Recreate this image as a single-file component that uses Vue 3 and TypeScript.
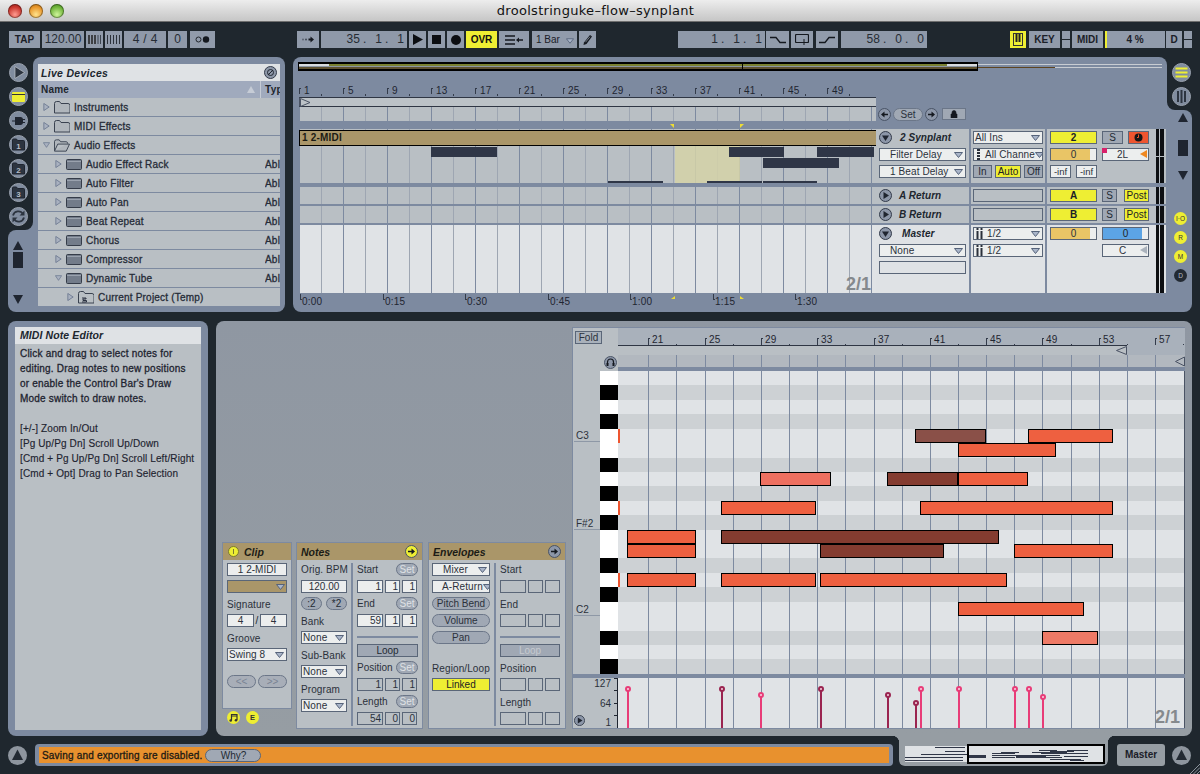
<script setup lang="ts">
interface BrowserRow { name: string; level: number; open?: boolean; icon: string; type?: string }
interface Note { row: number; from: number; to: number; tone: string }
interface Stem { x: number; top: number; dark?: boolean }

const browserRows: BrowserRow[] = [
  { name: 'Instruments', level: 0, icon: 'folder' },
  { name: 'MIDI Effects', level: 0, icon: 'folder' },
  { name: 'Audio Effects', level: 0, open: true, icon: 'folder-open' },
  { name: 'Audio Effect Rack', level: 1, icon: 'device', type: 'Abl' },
  { name: 'Auto Filter', level: 1, icon: 'device', type: 'Abl' },
  { name: 'Auto Pan', level: 1, icon: 'device', type: 'Abl' },
  { name: 'Beat Repeat', level: 1, icon: 'device', type: 'Abl' },
  { name: 'Chorus', level: 1, icon: 'device', type: 'Abl' },
  { name: 'Compressor', level: 1, icon: 'device', type: 'Abl' },
  { name: 'Dynamic Tube', level: 1, open: true, icon: 'device', type: 'Abl' },
  { name: 'Current Project (Temp)', level: 2, icon: 'project' },
]

// arrangement ruler: 44px for every 4 bars
const arrTicks = Array.from({ length: 13 }, (_, i) => ({ label: String(1 + i * 4), x: i * 44 }))
const timeTicks = ['0:00', '0:15', '0:30', '0:45', '1:00', '1:15', '1:30'].map((label, i) => ({ label, x: Math.round(i * 82.5) }))
const arrClips = [
  { x: 132, w: 66, y: 18, h: 10 }, { x: 430, w: 55, y: 18, h: 10 }, { x: 518, w: 57, y: 18, h: 10 },
  { x: 464, w: 76, y: 29, h: 10 }, { x: 309, w: 55, y: 52, h: 2 }, { x: 408, w: 55, y: 52, h: 2 }, { x: 464, w: 54, y: 52, h: 2 },
]

// piano roll: 56.3px for every 4 bars, first labelled tick is bar 21
const rollX = (bar: number) => Math.round(30.3 + ((bar - 21) / 4) * 56.3)
const rollTicks = Array.from({ length: 10 }, (_, i) => ({ label: String(21 + i * 4), x: rollX(21 + i * 4) }))
const rollHalf = Array.from({ length: 10 }, (_, i) => rollX(23 + i * 4))
const rollLines = Array.from({ length: 19 }, (_, i) => rollX(21 + i * 2))

const ROW_H = 14.43
const blackRows = [1, 3, 6, 8, 10, 13, 15, 18, 20]
const rows = Array.from({ length: 21 }, (_, i) => blackRows.includes(i))
const bright = '#ee6040'
const deep = '#843c30'
const notes: Note[] = [
  { row: 4, from: 915, to: 986, tone: '#8a5048' }, { row: 4, from: 1028, to: 1113, tone: bright },
  { row: 5, from: 958, to: 1056, tone: bright },
  { row: 7, from: 760, to: 831, tone: '#ee7060' }, { row: 7, from: 887, to: 958, tone: deep }, { row: 7, from: 958, to: 1028, tone: bright },
  { row: 9, from: 721, to: 816, tone: bright }, { row: 9, from: 920, to: 1113, tone: bright },
  { row: 11, from: 627, to: 696, tone: bright }, { row: 11, from: 721, to: 999, tone: deep },
  { row: 12, from: 627, to: 696, tone: bright }, { row: 12, from: 820, to: 944, tone: deep }, { row: 12, from: 1014, to: 1113, tone: bright },
  { row: 14, from: 627, to: 696, tone: bright }, { row: 14, from: 721, to: 816, tone: bright }, { row: 14, from: 820, to: 1007, tone: bright },
  { row: 16, from: 958, to: 1084, tone: bright },
  { row: 18, from: 1042, to: 1098, tone: '#ee7a66' },
]
const noteBox = (n: Note) => ({
  left: n.from - 618 + 'px',
  width: n.to - n.from + 'px',
  top: Math.round(n.row * ROW_H) + 'px',
  height: '14px',
  background: n.tone,
})
const playedRows = [4, 9, 14]

const stems: Stem[] = [
  { x: 628, top: 689 }, { x: 722, top: 689, dark: true }, { x: 761, top: 695 }, { x: 821, top: 689, dark: true },
  { x: 888, top: 695, dark: true }, { x: 916, top: 703, dark: true }, { x: 921, top: 689 }, { x: 959, top: 689 },
  { x: 1015, top: 689 }, { x: 1029, top: 689 }, { x: 1043, top: 697 },
]

// minimap in the bottom tab is the same notes at a small scale
const miniNotes = notes.map((n) => ({
  left: 62 + (n.from - 620) * 0.245 + 'px',
  width: (n.to - n.from) * 0.245 + 'px',
  top: 1 + n.row * 0.72 + 'px',
}))
const miniLeft = [
  { x: 0, w: 58, y: 11 }, { x: 0, w: 58, y: 14 }, { x: 16, w: 46, y: 8 }, { x: 40, w: 20, y: 5 }, { x: 30, w: 30, y: 1 },
]

const helpText = [
  'Click and drag to select notes for',
  'editing. Drag notes to new positions',
  'or enable the Control Bar\'s Draw',
  'Mode switch to draw notes.',
  '',
  '[+/-] Zoom In/Out',
  '[Pg Up/Pg Dn] Scroll Up/Down',
  '[Cmd + Pg Up/Pg Dn] Scroll Left/Right',
  '[Cmd + Opt] Drag to Pan Selection',
]
</script>

<template>
  <div class="app">
    <svg class="defs" width="0" height="0">
      <symbol id="tri-down" viewBox="0 0 9 6"><path d="M.5.5h8L4.5 5.5z" fill="#a9b5c9" stroke="#56637a" /></symbol>
      <symbol id="tri-right" viewBox="0 0 7 9"><path d="M.5.5v8l6-4z" fill="#a9b1c0" stroke="#6d7a92" /></symbol>
      <symbol id="tri-open" viewBox="0 0 9 7"><path d="M.5.5h8l-4 6z" fill="#a9b1c0" stroke="#6d7a92" /></symbol>
      <symbol id="folder" viewBox="0 0 16 13"><path d="M.5 2.500q0-2 2-2h3l1.500 2h7q2 0 2 2v7.500h-15.500z" fill="#b0b6bc" stroke="#3a4250" /></symbol>
      <symbol id="folder-open" viewBox="0 0 17 13"><path d="M.5 12V2.500q0-2 2-2h3l1.500 2h6q1.500 0 1.500 2M.5 12.500h12.500l3.500-7.500H4z" fill="#b0b6bc" stroke="#3a4250" /></symbol>
      <symbol id="device" viewBox="0 0 16 11"><rect x=".5" y=".5" width="15" height="10" rx="1" fill="#737c8a" stroke="#353c49" /><path d="M1 2.500h14" stroke="#9aa2ae" /></symbol>
      <symbol id="project" viewBox="0 0 16 13"><path d="M.5 2.500q0-2 2-2h3l1.500 2h7q2 0 2 2v7.500h-15.500z" fill="#b9bfc4" stroke="#3a4250" /><path d="M4 7h4v1H5v1.500h3.500V11H4" fill="none" stroke="#2a3140" /></symbol>
      <symbol id="track-down" viewBox="0 0 13 13"><circle cx="6.500" cy="6.500" r="6" fill="#8c96a8" stroke="#333b4a" /><path d="M3 4.500h7l-3.500 5.500z" fill="#1f2530" /></symbol>
      <symbol id="track-right" viewBox="0 0 13 13"><circle cx="6.500" cy="6.500" r="6" fill="#8c96a8" stroke="#333b4a" /><path d="M4.500 3v7L10 6.500z" fill="#1f2530" /></symbol>
      <symbol id="arrow-right" viewBox="0 0 13 13"><circle cx="6.500" cy="6.500" r="6" fill="currentColor" stroke="#4a5466" /><path d="M3 5.700h3.500V3.500L10 6.500 6.500 9.500V7.300H3z" fill="#14181f" /></symbol>
      <symbol id="ii" viewBox="0 0 7 11"><path d="M.5 0h2v2h-2zM.5 3h2v8h-2zM4.500 0h2v2h-2zM4.500 3h2v8h-2z" fill="#2b313b" /></symbol>
      <symbol id="dots" viewBox="0 0 5 11"><path d="M1 0h3v2H1zM1 3h3v2H1zM1 6h3v2H1zM1 9h3v2H1z" fill="#2b313b" /></symbol>
    </svg>

    <!-- title bar -->
    <header class="titlebar">
      <div class="lights">
        <span class="light red"></span><span class="light amber"></span><span class="light green"></span>
      </div>
      <span class="doc">droolstringuke–flow–synplant</span>
    </header>

    <!-- control bar -->
    <div class="ctrl">
      <span class="cb bold w31">TAP</span>
      <span class="cb big w42">120.00</span>
      <span class="cb w17"><svg width="13" height="9" viewBox="0 0 13 9"><path d="M1 0v9M4 0v9M7 0v9" stroke="#222" stroke-width="1.500" /><path d="M10 0v9M12.500 0v9" stroke="#3d4550" /></svg></span>
      <span class="cb w17"><svg width="13" height="9" viewBox="0 0 13 9"><path d="M.5 0v9M3.500 0v9M6.500 0v9M9.500 0v9M12.500 0v9" stroke="#2c323b" /></svg></span>
      <span class="cb big w42 sig">4 <i>/</i> 4</span>
      <span class="cb big w19">0</span>
      <span class="cb w25 m1"><svg width="15" height="7" viewBox="0 0 15 7"><circle cx="3.500" cy="3.500" r="2.500" fill="none" stroke="#22272e" /><circle cx="11" cy="3.500" r="3.200" fill="#14181f" /></svg></span>

      <span class="cb w22 far"><svg width="12" height="7" viewBox="0 0 12 7"><circle cx="1" cy="3.500" r="1" fill="#5d6673" /><circle cx="4" cy="3.500" r="1" fill="#414954" /><path d="M6.500 2.500h2V.5L12 3.500 8.500 6.500V4.500h-2z" fill="#14181f" /></svg></span>
      <span class="cb big w86 pos"><b>35</b><i>.</i><b>1</b><i>.</i><b>1</b></span>
      <span class="cb w17"><svg width="10" height="11" viewBox="0 0 10 11"><path d="M0 0v11l10-5.500z" fill="#0c0e12" /></svg></span>
      <span class="cb w17"><svg width="9" height="9" viewBox="0 0 9 9"><rect width="9" height="9" fill="#0c0e12" /></svg></span>
      <span class="cb w17"><svg width="10" height="10" viewBox="0 0 10 10"><circle cx="5" cy="5" r="5" fill="#0c0e12" /></svg></span>
      <span class="cb on w31">OVR</span>
      <span class="cb w30"><svg width="18" height="10" viewBox="0 0 18 10"><path d="M0 1h10M0 5h10M0 9h10" stroke="#14181f" stroke-width="1.400" /><path d="M11 5l3-2.500v1.700h4v1.600h-4v1.700z" fill="#14181f" /></svg></span>
      <span class="cb w45 m1 bar">1 Bar<svg class="t" width="8" height="6"><use href="#tri-down" /></svg></span>
      <span class="cb w17"><svg width="10" height="11" viewBox="0 0 10 11"><path d="M1 8.500L7 1l2 1.500L3.500 10 .5 11z" fill="#14181f" /><path d="M2.500 8.200l4.500-5.500" stroke="#9aa3af" stroke-width=".7" /></svg></span>

      <span class="cb big w87 far pos"><b>1</b><i>.</i><b>1</b><i>.</i><b>1</b></span>
      <span class="cb w23 m-1"><svg width="16" height="8" viewBox="0 0 16 8"><path d="M0 1.500h6l4 5h6" fill="none" stroke="#14181f" stroke-width="1.300" /></svg></span>
      <span class="cb w22"><svg width="14" height="11" viewBox="0 0 14 11"><path d="M7 8.500H1.500q-1 0-1-1v-6q0-1 1-1h11q1 0 1 1v6q0 1-1 1H10" fill="none" stroke="#14181f" stroke-width="1.200" /><path d="M8.500 5v3H7v1h1.500v2h1V9H11V8H9.500V5z" fill="#14181f" /></svg></span>
      <span class="cb w22 m1"><svg width="16" height="8" viewBox="0 0 16 8"><path d="M0 6.500h6l4-5h6" fill="none" stroke="#14181f" stroke-width="1.300" /></svg></span>
      <span class="cb big w86 m1 pos"><b>58</b><i>.</i><b>0</b><i>.</i><b>0</b></span>

      <span class="cb on w16 far2"><svg width="10" height="13" viewBox="0 0 10 13"><rect x=".5" y=".5" width="9" height="12" fill="#eeee33" stroke="#333" /><path d="M3.500 1v8M6.500 1v8" stroke="#222" stroke-width="2" /></svg></span>
      <span class="cb bold w31 m1">KEY</span>
      <span class="stack"><i></i><i></i></span>
      <span class="cb bold w31">MIDI</span>
      <span class="cb load w60">4 %</span>
      <span class="cb bold w16 m-1">D</span>
      <span class="stack"><i></i><i></i></span>
    </div>

    <!-- browser and arrangement -->
    <section class="upper">
      <aside class="rail">
        <div class="rail-top">
          <div class="notch">
            <div class="rail-btns">
              <svg class="rb" viewBox="0 0 19 19"><circle cx="9.500" cy="9.500" r="9" fill="#808c9f" stroke="#9aa2ae" /><path d="M6 3.500v12l9.500-6z" fill="#2c3440" stroke="#c0c5cb" stroke-width=".7" /></svg>
              <svg class="rb" viewBox="0 0 19 19"><circle cx="9.500" cy="9.500" r="9" fill="#808c9f" stroke="#9aa2ae" /><rect x="3" y="5" width="13" height="10" rx="1" fill="#eeee33" /><path d="M3 7.500h13" stroke="#333" /></svg>
              <svg class="rb" viewBox="0 0 19 19"><circle cx="9.500" cy="9.500" r="9" fill="#808c9f" stroke="#9aa2ae" /><path d="M3 9.500h3V6h5.500q2 0 2.500 2h2v1h-2v2h2v1h-2q-.5 2-2.500 2H6V10.500H3z" fill="#1f2530" /></svg>
              <svg v-for="n in 3" :key="n" class="rb" viewBox="0 0 19 19"><circle cx="9.500" cy="9.500" r="9" fill="#808c9f" stroke="#9aa2ae" /><path d="M3.500 15V5q0-1 1-1h3l1 1.500h6q1 0 1 1V15z" fill="#2c3440" stroke="#1f2530" /><text x="9.500" y="14" class="rb-num">{{ n }}</text></svg>
              <svg class="rb" viewBox="0 0 19 19"><circle cx="9.500" cy="9.500" r="9" fill="#808c9f" stroke="#9aa2ae" /><path d="M4 8.500A5.500 5.500 0 0 1 14 7M15 10.500A5.500 5.500 0 0 1 5 12" fill="none" stroke="#2c3440" stroke-width="1.800" /><path d="M15.500 3.500v5h-5zM3.500 15.500v-5h5z" fill="#2c3440" /></svg>
            </div>
          </div>
        </div>
        <div class="scroll-tab">
          <span class="up"></span>
          <span class="thumb"></span>
          <span class="down"></span>
        </div>
      </aside>

      <div class="browser">
        <div class="b-title"><span>Live Devices</span>
          <svg width="13" height="13" viewBox="0 0 13 13"><circle cx="6.500" cy="6.500" r="6" fill="#8d97a8" stroke="#333b4a" /><circle cx="6.500" cy="6.500" r="3" fill="none" stroke="#1f2530" /><path d="M4 9l5-5" stroke="#1f2530" /></svg>
        </div>
        <div class="b-head">
          <span class="b-name">Name</span><span class="b-sort"></span><span class="b-typ">Typ</span>
        </div>
        <div v-for="row in browserRows" :key="row.name" class="b-row" :class="'lvl' + row.level">
          <svg v-if="row.open" class="b-arrow" width="7" height="6"><use href="#tri-open" /></svg>
          <svg v-else class="b-arrow" width="6" height="8"><use href="#tri-right" /></svg>
          <svg class="b-ic" width="16" height="13"><use :href="'#' + row.icon" /></svg>
          <span class="b-label">{{ row.name }}</span>
          <span class="b-type">{{ row.type }}</span>
        </div>
      </div>

      <div class="arr">
        <div class="arr-main">
          <div class="overview">
            <div class="ov-frame"><span class="ov-start"></span><span class="ov-end"></span><span class="ov-tick"></span></div>
            <div class="ov-rest"><span class="ov-brown"></span></div>
          </div>

          <div class="arr-ruler">
            <span v-for="t in arrTicks" :key="t.label" class="atick" :style="{ left: t.x + 'px' }">{{ t.label }}</span>
            <span v-for="t in arrTicks" :key="'d' + t.label" class="adot" :style="{ left: t.x + 22 + 'px' }"></span>
          </div>
          <div class="loc-row">
            <div class="loc-bar"><svg width="12" height="9" viewBox="0 0 12 9"><path d="M.5.500L10 4.500.5 8.500z" fill="none" stroke="#4a5364" /></svg></div>
          </div>
          <div class="set-row">
            <div class="lane grid"></div>
            <div class="set-btns">
              <svg class="rnd flip" width="13" height="13"><use href="#arrow-right" /></svg>
              <span class="pill set-big">Set</span>
              <svg class="rnd" width="13" height="13"><use href="#arrow-right" /></svg>
              <span class="lock"><svg width="8" height="8" viewBox="0 0 8 8"><path d="M2 4V2.500a2 2 0 0 1 4 0V4M1 4h6v4H1z" fill="#14181f" stroke="#14181f" stroke-width=".6" fill-rule="evenodd" /></svg></span>
            </div>
          </div>
          <div class="strip"></div>
          <i class="mark m-a"></i><i class="mark m-b"></i>

          <!-- track 2 Synplant -->
          <div class="track t1">
            <div class="lane grid tall">
              <div class="clip-head">1 2-MIDI</div>
              <div class="loop-fill"></div>
              <span v-for="(c, i) in arrClips" :key="i" class="aclip" :style="{ left: c.x + 'px', width: c.w + 'px', top: c.y + 'px', height: c.h + 'px' }"></span>
            </div>
            <div class="col c1 grey">
              <div class="name-row"><svg width="13" height="13"><use href="#track-down" /></svg><b>2 Synplant</b></div>
              <div class="sel center">Filter Delay<svg width="9" height="6"><use href="#tri-down" /></svg></div>
              <div class="sel center">1 Beat Delay<svg width="9" height="6"><use href="#tri-down" /></svg></div>
            </div>
            <div class="col c2 grey">
              <div class="sel">All Ins<svg width="9" height="6"><use href="#tri-down" /></svg></div>
              <div class="sel"><svg class="lead" width="5" height="11"><use href="#dots" /></svg>All Channe<svg width="9" height="6"><use href="#tri-down" /></svg></div>
              <div class="io-row"><span class="mini w19b">In</span><span class="mini yellow w26b">Auto</span><span class="mini w19b">Off</span></div>
            </div>
            <div class="col c3 grey">
              <div class="mix">
                <span class="tag yellow bold-t">2</span>
                <div class="pair"><span class="mini sq">S</span><span class="mini rec"><svg width="9" height="9" viewBox="0 0 9 9"><circle cx="4.500" cy="4.500" r="4" fill="#161616" /><path d="M4.500 1.500v3H3" stroke="#ee5530" /></svg></span></div>
                <span class="tag vol">0</span>
                <span class="tag pan"><i class="pink"></i>2L<i class="tri-o"></i></span>
                <div class="pair"><span class="tag inf">-inf</span><span class="tag inf">-inf</span></div>
              </div>
              <span class="meter split"></span>
            </div>
          </div>

          <div class="track t-ret">
            <div class="lane grid"></div>
            <div class="col c1 grey"><div class="name-row ret"><svg width="13" height="13"><use href="#track-right" /></svg><b>A Return</b></div></div>
            <div class="col c2 grey"><div class="empty"></div></div>
            <div class="col c3 grey">
              <div class="mix"><span class="tag yellow bold-t">A</span>
                <div class="pair post"><span class="mini sq">S</span><span class="mini yellow">Post</span></div></div>
              <span class="meter"></span>
            </div>
          </div>
          <div class="track t-ret">
            <div class="lane grid"></div>
            <div class="col c1 grey"><div class="name-row ret"><svg width="13" height="13"><use href="#track-right" /></svg><b>B Return</b></div></div>
            <div class="col c2 grey"><div class="empty"></div></div>
            <div class="col c3 grey">
              <div class="mix"><span class="tag yellow bold-t">B</span>
                <div class="pair post"><span class="mini sq">S</span><span class="mini yellow">Post</span></div></div>
              <span class="meter"></span>
            </div>
          </div>

          <div class="track t-master">
            <div class="lane grid pale-lane">
              <span class="ratio">2/1</span>
            </div>
            <div class="col c1 pale">
              <div class="name-row master"><svg width="13" height="13"><use href="#track-down" /></svg><b>Master</b></div>
              <div class="sel center">None<svg width="9" height="6"><use href="#tri-down" /></svg></div>
              <div class="empty wide"></div>
            </div>
            <div class="col c2 pale">
              <div class="sel"><svg class="lead" width="7" height="11"><use href="#ii" /></svg>1/2<svg width="9" height="6"><use href="#tri-down" /></svg></div>
              <div class="sel"><svg class="lead" width="7" height="11"><use href="#ii" /></svg>1/2<svg width="9" height="6"><use href="#tri-down" /></svg></div>
            </div>
            <div class="col c3 pale">
              <div class="mix">
                <span class="tag vol">0</span>
                <span class="tag vol blue">0</span>
                <span></span>
                <span class="tag pan">C<i class="tri-g"></i></span>
              </div>
              <span class="meter"></span>
            </div>
          </div>

          <div class="time-ruler">
            <span v-for="t in timeTicks" :key="t.label" class="ttick" :style="{ left: t.x + 'px' }">{{ t.label }}</span>
            <i class="mark low m-a2"></i><i class="mark low m-b2"></i>
          </div>
        </div>

        <div class="arr-rail">
          <div class="rail-top r">
            <div class="notch r">
              <svg class="rb" viewBox="0 0 19 19"><circle cx="9.500" cy="9.500" r="9" fill="#808c9f" stroke="#9aa2ae" /><path d="M3.500 5.500h12M3.500 9.500h12M3.500 13.500h12" stroke="#eeee33" stroke-width="2.200" /></svg>
              <svg class="rb" viewBox="0 0 19 19"><circle cx="9.500" cy="9.500" r="9" fill="#808c9f" stroke="#9aa2ae" /><path d="M6 4v11M9.500 3v13M13 4v11" stroke="#2c3440" stroke-width="2" /></svg>
            </div>
          </div>
          <div class="rail-low">
            <span class="up"></span>
            <span class="thumb"></span>
            <span class="down"></span>
            <div class="sw-stack">
              <span class="sw">I·O</span><span class="sw">R</span><span class="sw">M</span><span class="sw off">D</span>
            </div>
          </div>
        </div>
      </div>
    </section>

    <!-- info view and detail view -->
    <section class="bottom">
      <aside class="info">
        <h4>MIDI Note Editor</h4>
        <div class="help">
          <p v-for="(line, i) in helpText" :key="i" :class="{ keyline: i > 4 }">{{ line }}</p>
        </div>
      </aside>

      <div class="detail">
        <div class="devices">
          <div class="clip-col">
            <div class="dev clip-dev">
              <div class="dev-title"><span class="power"></span><span>Clip</span></div>
              <div class="dev-col pad">
                <span class="val c">1 2-MIDI</span>
                <span class="val tan"><svg width="9" height="6"><use href="#tri-down" /></svg></span>
                <span class="lab">Signature</span>
                <div class="sig-row"><span class="val c">4</span><i>/</i><span class="val c">4</span></div>
                <span class="lab">Groove</span>
                <div class="sel slim">Swing 8<svg width="9" height="6"><use href="#tri-down" /></svg></div>
                <div class="nudge"><span class="pill dim">&lt;&lt;</span><span class="pill dim">&gt;&gt;</span></div>
              </div>
            </div>
            <div class="clip-sw">
              <span class="sw big"><svg width="9" height="9" viewBox="0 0 9 9"><path d="M2.500 7.500V1.500h5.500v5.500M2.500 3h5.500" fill="none" stroke="#333" stroke-width="1.200" /><circle cx="1.700" cy="7.500" r="1.300" fill="#333" /><circle cx="7" cy="7.200" r="1.300" fill="#333" /></svg></span>
              <span class="sw big">E</span>
            </div>
          </div>

          <div class="dev notes-dev">
            <div class="dev-title"><span>Notes</span><svg class="rnd-end on-y" width="13" height="13"><use href="#arrow-right" /></svg></div>
            <div class="dev-body">
              <div class="dev-col n-left">
                <span class="lab first">Orig. BPM</span>
                <span class="val c">120.00</span>
                <div class="pair-p"><span class="pill">:2</span><span class="pill">*2</span></div>
                <span class="lab">Bank</span>
                <div class="sel slim">None<svg width="9" height="6"><use href="#tri-down" /></svg></div>
                <span class="lab">Sub-Bank</span>
                <div class="sel slim">None<svg width="9" height="6"><use href="#tri-down" /></svg></div>
                <span class="lab">Program</span>
                <div class="sel slim">None<svg width="9" height="6"><use href="#tri-down" /></svg></div>
              </div>
              <span class="divider"></span>
              <div class="dev-col n-right">
                <div class="lab-set"><span>Start</span><span class="pill faded">Set</span></div>
                <div class="triple"><span class="val">1</span><span class="val">1</span><span class="val">1</span></div>
                <div class="lab-set"><span>End</span><span class="pill faded">Set</span></div>
                <div class="triple"><span class="val">59</span><span class="val">1</span><span class="val">1</span></div>
                <span class="rule"></span>
                <span class="btn-flat">Loop</span>
                <div class="lab-set"><span>Position</span><span class="pill faded">Set</span></div>
                <div class="triple"><span class="val dimmed">1</span><span class="val dimmed">1</span><span class="val dimmed">1</span></div>
                <div class="lab-set"><span>Length</span><span class="pill faded">Set</span></div>
                <div class="triple"><span class="val dimmed">54</span><span class="val dimmed">0</span><span class="val dimmed">0</span></div>
              </div>
            </div>
          </div>

          <div class="dev env-dev">
            <div class="dev-title"><span>Envelopes</span><svg class="rnd-end" width="13" height="13"><use href="#arrow-right" /></svg></div>
            <div class="dev-body">
              <div class="dev-col e-left">
                <div class="sel center">Mixer<svg width="9" height="6"><use href="#tri-down" /></svg></div>
                <div class="sel center clip-text">A-Return<svg width="9" height="6"><use href="#tri-down" /></svg></div>
                <span class="pill full">Pitch Bend</span>
                <span class="pill full">Volume</span>
                <span class="pill full">Pan</span>
                <span class="lab region">Region/Loop</span>
                <span class="val c linked">Linked</span>
              </div>
              <span class="divider"></span>
              <div class="dev-col e-right">
                <span class="lab first">Start</span>
                <div class="triple"><span class="val dimmed"></span><span class="val dimmed"></span><span class="val dimmed"></span></div>
                <span class="lab">End</span>
                <div class="triple"><span class="val dimmed"></span><span class="val dimmed"></span><span class="val dimmed"></span></div>
                <span class="rule"></span>
                <span class="btn-flat ghost">Loop</span>
                <span class="lab">Position</span>
                <div class="triple"><span class="val dimmed"></span><span class="val dimmed"></span><span class="val dimmed"></span></div>
                <span class="lab">Length</span>
                <div class="triple"><span class="val dimmed"></span><span class="val dimmed"></span><span class="val dimmed"></span></div>
              </div>
            </div>
          </div>
        </div>

        <div class="piano">
          <div class="pr-top">
            <div class="pr-corner">
              <span class="fold">Fold</span>
              <svg class="phones" width="13" height="13" viewBox="0 0 13 13"><circle cx="6.500" cy="6.500" r="6" fill="#8c96a8" stroke="#4a5466" /><path d="M3.500 8V6a3 3 0 0 1 6 0v2" fill="none" stroke="#14181f" stroke-width="1.200" /><rect x="2.500" y="7" width="2" height="3" fill="#14181f" /><rect x="8.500" y="7" width="2" height="3" fill="#14181f" /></svg>
            </div>
            <div class="pr-head">
              <div class="pr-ruler">
                <span v-for="t in rollTicks" :key="t.label" class="rtick" :style="{ left: t.x + 'px' }">{{ t.label }}</span>
                <span v-for="x in rollHalf" :key="x" class="rdot" :style="{ left: x + 'px' }"></span>
              </div>
              <div class="pr-bar"><svg width="11" height="9" viewBox="0 0 11 9"><path d="M10.500.5L.5 4.500l10 4z" fill="none" stroke="#4a5364" /></svg></div>
              <div class="pr-sub">
                <span v-for="x in rollLines" :key="x" class="gl" :style="{ left: x + 'px' }"></span>
                <svg class="end-tri" width="10" height="11" viewBox="0 0 10 11"><path d="M9.500 1L.5 5.500l9 4.500z" fill="none" stroke="#4a5364" /></svg>
              </div>
              <div class="pr-band"></div>
            </div>
          </div>

          <div class="pr-main">
            <div class="pitch-labels">
              <span class="pitch p-c3">C3</span>
              <span class="pitch p-fs2">F#2</span>
              <span class="pitch p-c2">C2</span>
            </div>
            <div class="keys">
              <span v-for="(isBlack, i) in rows" :key="i" class="key" :class="{ black: isBlack }"></span>
            </div>
            <div class="roll">
              <div v-for="(isBlack, i) in rows" :key="i" class="r-row" :class="{ black: isBlack }"></div>
              <span v-for="x in rollLines" :key="x" class="gl" :style="{ left: x + 'px' }"></span>
              <span v-for="(n, i) in notes" :key="i" class="note" :style="noteBox(n)"></span>
              <span v-for="r in playedRows" :key="r" class="played" :style="{ top: Math.round(r * ROW_H) + 'px' }"></span>
            </div>
          </div>

          <div class="vel-band"></div>

          <div class="vel">
            <div class="vel-axis">
              <span class="v127">127</span><span class="v64">64</span><span class="v1">1</span>
              <svg class="vel-play" width="11" height="11"><use href="#track-right" /></svg>
            </div>
            <div class="vel-lane">
              <span v-for="x in rollLines" :key="x" class="gl" :style="{ left: x + 'px' }"></span>
              <span v-for="s in stems" :key="s.x" class="stem" :class="{ dark: s.dark }"
                :style="{ left: s.x - 619 + 'px', top: s.top - 678 + 'px' }"></span>
              <span class="ratio vel-ratio">2/1</span>
            </div>
          </div>
        </div>
      </div>
    </section>

    <!-- status bar -->
    <footer class="status">
      <svg class="rb solo" viewBox="0 0 19 19"><circle cx="9.500" cy="9.500" r="9.500" fill="#8e959e" /><path d="M9.500 3.500L15 14H4z" fill="#232a33" /></svg>
      <div class="st-bar">
        <div class="st-msg"><span class="st-text">Saving and exporting are disabled.</span><span class="why">Why?</span></div>
      </div>
      <div class="st-tab">
        <div class="mini-map">
          <span v-for="(m, i) in miniLeft" :key="i" class="mn" :style="{ left: m.x + 'px', width: m.w + 'px', top: m.y + 'px' }"></span>
          <span v-for="(m, i) in miniNotes" :key="'n' + i" class="mn" :style="m"></span>
          <div class="mini-frame"></div>
        </div>
      </div>
      <span class="st-master">Master</span>
      <svg class="rb solo end" viewBox="0 0 19 19"><circle cx="9.500" cy="9.500" r="9.500" fill="#8e959e" /><path d="M9.500 3.500L15 14H4z" fill="#232a33" /></svg>
      <svg class="grip" width="10" height="10" viewBox="0 0 10 10"><path d="M10 0L0 10M10 3.500L3.500 10M10 7L7 10" stroke="#8b929b" /></svg>
    </footer>
  </div>
</template>

<style>
html, body { margin: 0; background: #1f272e; }
</style>

<style scoped>
.app {
  position: relative;
  width: 1200px;
  height: 774px;
  overflow: hidden;
  display: flex;
  flex-direction: column;
  background: #1f272e;
  color: #20262e;
  font: 10px/13px "Liberation Sans", Arial, sans-serif;
}
.defs { position: absolute; }
i { font-style: normal; }
p, h4 { margin: 0; }

/* window chrome */
.titlebar {
  flex: none;
  height: 22px;
  position: relative;
  display: flex;
  justify-content: center;
  align-items: center;
  padding-right: 9px;
  background: linear-gradient(#ededed, #d9d9d9 50%, #c6c6c6);
  border-bottom: 1px solid #6e6e6e;
  box-sizing: border-box;
}
.doc { font: 13px "DejaVu Sans", sans-serif; color: #111; letter-spacing: .3px; }
.lights { position: absolute; left: 8px; top: 4px; display: flex; gap: 7px; }
.light { width: 14px; height: 14px; border-radius: 50%; box-shadow: inset 0 0 0 1px rgba(0, 0, 0, .35); }
.red { background: radial-gradient(circle at 50% 75%, #ff9b90, #c8352c 60%, #8e1f1a); }
.amber { background: radial-gradient(circle at 50% 75%, #ffe38c, #e8962a 60%, #a86a14); }
.green { background: radial-gradient(circle at 50% 75%, #cff59a, #6fb43a 60%, #3f7e1f); }

/* control bar */
.ctrl { flex: none; display: flex; height: 17px; margin-top: 9px; padding-left: 9px; gap: 2px; }
.cb {
  box-sizing: border-box;
  height: 17px;
  display: flex;
  align-items: center;
  justify-content: center;
  background: #919bab;
  color: #1b2028;
  font-size: 11px;
}
.cb.big { color: #262c34; font-size: 12px; background: #8f99a9; }
.cb.bold { font-weight: 700; font-size: 10px; color: #1b2028; }
.cb.on { background: #eeee33; font-weight: 700; font-size: 10px; color: #111; }
.sig i { margin: 0 4px; }
.pos { justify-content: flex-end; padding-right: 3px; }
.pos b { font-weight: 400; }
.pos i { margin: 0 9px 0 3px; }
.pos b:last-child { margin: 0; }
.bar { justify-content: flex-start; padding-left: 4px; font-size: 10px; position: relative; }
.bar .t { position: absolute; right: 3px; top: 7px; }
.w16 { width: 16px; } .w17 { width: 17px; } .w19 { width: 19px; } .w22 { width: 22px; } .w23 { width: 23px; }
.w25 { width: 25px; } .w30 { width: 30px; } .w31 { width: 31px; } .w42 { width: 42px; } .w45 { width: 45px; }
.w60 { width: 60px; } .w86 { width: 86px; } .w87 { width: 87px; }
.m1 { margin-left: 1px; }
.m-1 { margin-left: -1px; }
.far { margin-left: 80px; }
.far2 { margin-left: 81px; }
.stack { width: 8px; display: flex; flex-direction: column; gap: 1px; }
.stack i { flex: 1; background: #919bab; }
.load {
  font-weight: 700;
  font-size: 10px;
  background: linear-gradient(90deg, #eeee33 2px, #919bab 2px);
}

/* top row */
.upper { flex: none; display: flex; height: 255px; margin-top: 9px; }
.rail { width: 33px; flex: none; display: flex; flex-direction: column; }
.rail-top {
  height: 173px;
  flex: none;
  background: linear-gradient(#7d8aa0, #7d8aa0) no-repeat right bottom / 9px 9px;
}
.notch { height: 100%; background: #1f272e; border-bottom-right-radius: 8px; }
.rail-btns { display: flex; flex-direction: column; gap: 5px; padding: 6px 0 0 9px; }
.rb { width: 19px; height: 19px; display: block; flex: none; }
.rb-num { font: 700 8px "Liberation Sans", sans-serif; text-anchor: middle; fill: #b5bcc6; }
.scroll-tab {
  flex: 1;
  margin-left: 8px;
  background: #7d8aa0;
  border-radius: 8px 0 0 8px;
  display: flex;
  flex-direction: column;
  padding: 11px 0 0 5px;
}
.up, .down {
  display: block;
  width: 0;
  border-left: 5px solid transparent;
  border-right: 5px solid transparent;
}
.up { border-bottom: 9px solid #1f2530; }
.down { border-top: 9px solid #1f2530; }
.thumb { display: block; width: 10px; height: 16px; background: #1f2530; margin: 2px 0 27px; }

.browser {
  flex: none;
  width: 252px;
  box-sizing: border-box;
  padding: 7px 5px;
  background: #7d8aa0;
  border-radius: 8px 8px 8px 0;
  margin-right: 8px;
}
.b-title {
  height: 17px;
  background: #dfe2e5;
  display: flex;
  align-items: center;
  justify-content: space-between;
  padding: 0 3px;
  font: italic 700 10.500px "Liberation Sans", sans-serif;
  letter-spacing: .3px;
}
.b-head {
  height: 17px;
  background: #a0aabd;
  display: flex;
  align-items: center;
  padding-left: 3px;
  font-weight: 700;
  letter-spacing: .2px;
}
.b-name { width: 207px; }
.b-sort {
  width: 0;
  border-left: 4px solid transparent;
  border-right: 4px solid transparent;
  border-bottom: 7px solid #c6ccd6;
}
.b-typ { margin-left: 5px; padding-left: 4px; border-left: 1px solid #c6ccd6; line-height: 17px; overflow: hidden; width: 15px; }
.b-row {
  height: 19px;
  box-sizing: border-box;
  background: #b9bfc4;
  border-bottom: 1px solid #7d8aa0;
  display: flex;
  align-items: center;
  letter-spacing: .2px;
  -webkit-text-stroke: .3px #262c38;
  color: #262c38;
}
.b-row:last-child { border-bottom: 0; height: 18px; }
.b-arrow { width: 7px; flex: none; }
.lvl0 .b-arrow { margin-left: 5px; }
.lvl1 .b-arrow { margin-left: 17px; }
.lvl2 .b-arrow { margin-left: 29px; }
.b-ic { margin-left: 4px; margin-right: 4px; flex: none; }
.b-label { flex: 1; white-space: nowrap; }
.b-type { width: 15px; overflow: hidden; flex: none; }

/* arrangement */
.arr { flex: none; width: 899px; display: flex; }
.arr-main {
  width: 874px;
  flex: none;
  box-sizing: border-box;
  background: #7d8aa0;
  border-radius: 8px 8px 0 8px;
  padding: 5px 0 0 6px;
  position: relative;
}
.arr-rail { width: 25px; flex: none; display: flex; flex-direction: column; }
.rail-top.r { height: 53px; background-position: left bottom; }
.notch.r {
  border-bottom-right-radius: 0;
  border-bottom-left-radius: 8px;
  display: flex;
  flex-direction: column;
  gap: 5px;
  padding: 6px 0 0 5px;
  box-sizing: border-box;
}
.rail-low {
  flex: 1;
  background: #7d8aa0;
  border-radius: 0 8px 8px 0;
  display: flex;
  flex-direction: column;
  padding: 3px 0 0 11px;
}
.rail-low .thumb { margin: 18px 0 15px; }
.sw-stack { display: flex; flex-direction: column; gap: 6px; margin: 32px 0 0 -4px; }
.sw {
  width: 13px;
  height: 13px;
  border-radius: 50%;
  background: #eeee33;
  font-size: 6.500px;
  line-height: 13px;
  text-align: center;
  color: #333;
  display: block;
}
.sw.off { background: #232a33; color: #b5bcc6; }

.overview { display: flex; height: 9px; margin-left: -1px; width: 864px; }
.ov-frame {
  width: 680px;
  flex: none;
  box-sizing: border-box;
  border: 1px solid #000;
  border-width: 2px 1px;
  position: relative;
  background: linear-gradient(#7b8232 0 2px, #8c96a4 2px 3px, #5e5030 3px);
}
.ov-start { position: absolute; left: 0; top: 0; width: 30px; height: 2px; background: #d8dbde; }
.ov-end { position: absolute; right: 0; top: 0; width: 30px; height: 2px; background: #d8dbde; }
.ov-tick { position: absolute; left: 443px; top: -1px; height: 7px; width: 1px; background: #000; }
.ov-rest {
  flex: 1;
  position: relative;
  margin-top: 2px;
  height: 4px;
  background: linear-gradient(#c8ccd2 0 1px, transparent 1px 3px, #c8ccd2 3px);
}
.ov-brown { position: absolute; left: 0; top: 3px; width: 77px; height: 1px; background: #5e4420; }

.arr-ruler { position: relative; height: 14px; margin-top: 12px; width: 577px; }
.atick {
  position: absolute;
  top: 2px;
  font-size: 10px;
  line-height: 11px;
  color: #1f2530;
  letter-spacing: .2px;
  text-indent: 5px;
}
.atick::before { content: ""; position: absolute; left: 0; top: 3px; width: 2px; height: 6px; border: solid #333b4a; border-width: 1px 0 0 1px; box-sizing: border-box; }
.adot { position: absolute; top: 11px; width: 1px; height: 2px; background: #333b4a; }
.loc-row { height: 10px; width: 577px; }
.loc-bar {
  height: 10px;
  box-sizing: border-box;
  background: #bcc2c7;
  border: solid #2f3644;
  border-width: 1px 0;
  line-height: 0;
  border-left: 1px solid #4a5364;
}
.set-row { display: flex; height: 14px; }
.lane { width: 577px; flex: none; position: relative; background-color: #b9bfc4; }
.grid {
  background-image: repeating-linear-gradient(90deg, #7d8aa0 0 1px, transparent 1px 22px, #9ea6b2 22px 23px, transparent 23px 44px);
}
.set-btns { display: flex; align-items: flex-start; margin: 1px 0 0 2px; gap: 2px; }
.rnd { display: block; flex: none; color: #8c96a8; }
.flip { transform: scaleX(-1); }
.pill {
  box-sizing: border-box;
  height: 13px;
  line-height: 11px;
  border: 1px solid #6b7688;
  border-radius: 7px;
  background: #a0a8b4;
  text-align: center;
  font-size: 10px;
  display: block;
  color: #232a33;
}
.set-big { width: 30px; color: #2b313b; }
.lock {
  box-sizing: border-box;
  width: 24px;
  height: 12px;
  margin-left: 2px;
  background: #a0a8b4;
  border: 1px solid #6b7688;
  display: flex;
  align-items: center;
  justify-content: center;
}
.strip { height: 8px; }
.mark { position: absolute; width: 0; height: 0; z-index: 2; }
.m-a { left: 377px; top: 67px; border-top: 4px solid #eedd33; border-left: 4px solid transparent; }
.m-b { left: 447px; top: 67px; border-top: 4px solid #eedd33; border-right: 4px solid transparent; }
.mark.low { top: 3px; }
.m-a2 { left: 372px; border-bottom: 3px solid #eedd33; border-left: 4px solid transparent; }
.m-b2 { left: 441px; border-bottom: 3px solid #eedd33; border-right: 4px solid transparent; }

.track { display: flex; }
.t1 { height: 54px; margin-bottom: 4px; }
.t-ret { height: 17px; margin-bottom: 2px; }
.t-master { height: 68px; }
.lane.tall { height: 54px; }
.lane.pale-lane { background-color: #e0e3e6; }
.clip-head {
  height: 16px;
  margin-top: 1px;
  box-sizing: border-box;
  background: #aa9669;
  border: solid #000;
  border-width: 1px 0;
  border-left: 1px solid #000;
  font-weight: 700;
  padding-left: 2px;
  line-height: 14px;
  letter-spacing: .2px;
  color: #1b1b14;
}
.loop-fill { position: absolute; left: 376px; top: 17px; width: 65px; bottom: 0; background: #d5d2a8; opacity: .85; }
.aclip { position: absolute; background: #2f3647; }
.ratio {
  position: absolute;
  right: 5px;
  bottom: -1px;
  font: 700 18px/20px "Liberation Sans", sans-serif;
  color: #85898d;
}
.col {
  flex: none;
  box-sizing: border-box;
  display: flex;
  flex-direction: column;
  gap: 4px;
  padding: 2px 3px 0;
}
.c1 { width: 93px; margin-right: 2px; }
.c2 { width: 74px; margin-right: 2px; padding-left: 2px; padding-right: 2px; }
.c3 { width: 119px; flex-direction: row; gap: 0; }
.grey { background: #b9bfc4; }
.pale { background: #dfe2e5; }
.name-row {
  height: 13px;
  display: flex;
  align-items: center;
  font-style: italic;
  font-size: 10px;
  gap: 8px;
  letter-spacing: .05px;
}
.name-row.ret { gap: 7px; }
.name-row.master { gap: 10px; }
.sel {
  box-sizing: border-box;
  height: 13px;
  display: flex;
  align-items: center;
  background: #eceeee;
  border: 1px solid #5a6678;
  padding: 0 2px 0 1px;
  position: relative;
  white-space: nowrap;
  overflow: hidden;
  color: #2b313b;
  letter-spacing: .1px;
}
.sel > svg:last-child { margin-left: auto; flex: none; }
.sel.center { padding-left: 10px; }
.sel .lead { flex: none; margin: 0 4px 0 1px; }
.sel.slim { padding-left: 1px; }
.sel.clip-text { padding-left: 9px; }
.empty { height: 13px; box-sizing: border-box; border: 1px solid #5a6678; }
.empty.wide { background: transparent; }
.io-row { display: flex; gap: 3px; }
.mini {
  box-sizing: border-box;
  height: 13px;
  line-height: 11px;
  border: 1px solid #5a6678;
  background: #a0a8b4;
  text-align: center;
  display: block;
  color: #232a33;
}
.w19b { width: 19px; }
.w26b { width: 26px; }
.mini.yellow { background: #eeee33; color: #222; }
.mix {
  width: 102px;
  flex: none;
  display: grid;
  grid-template-columns: 47px 47px;
  column-gap: 5px;
  row-gap: 4px;
  grid-auto-rows: 13px;
  align-content: start;
}
.tag {
  box-sizing: border-box;
  border: 1px solid #5a6678;
  background: #eceeee;
  line-height: 11px;
  text-align: center;
  position: relative;
  display: block;
  color: #2b313b;
}
.tag.bold-t { background: #eeee33; font-weight: 700; color: #1b2028; }
.tag.vol { background: linear-gradient(90deg, #e9c566 39px, #eceeee 39px); }
.tag.vol.blue { background: linear-gradient(90deg, #5ca4e5 39px, #eceeee 39px); color: #222; }
.pan { padding-right: 6px; }
.pink { position: absolute; left: -1px; top: -1px; width: 5px; height: 5px; background: #d8206a; }
.tri-o, .tri-g {
  position: absolute;
  right: 1px;
  top: 1px;
  width: 0;
  border-top: 4px solid transparent;
  border-bottom: 4px solid transparent;
}
.tri-o { border-right: 7px solid #ee8822; }
.tri-g { border-right: 7px solid #aab2bc; }
.pair { display: flex; justify-content: space-between; }
.pair .sq { width: 21px; }
.pair .rec { width: 21px; background: #ee5530; display: flex; align-items: center; justify-content: center; }
.pair .inf { width: 21px; font-size: 9.500px; }
.post .sq { width: 15px; }
.post .yellow { width: 25px; }
.meter {
  width: 8px;
  margin: -2px 3px 0 4px;
  flex: none;
  background: linear-gradient(90deg, #0d0f12 0 3px, transparent 3px 4px, #0d0f12 4px);
}
.meter.split {
  background:
    linear-gradient(transparent 27px, #b9bfc4 27px 28px, transparent 28px),
    linear-gradient(90deg, #0d0f12 0 3px, transparent 3px 4px, #0d0f12 4px);
}
.time-ruler { position: relative; height: 19px; width: 577px; }
.ttick { position: absolute; top: 3px; font-size: 10px; line-height: 11px; padding-left: 3px; color: #1f2530; letter-spacing: .2px; }
.ttick::before { content: ""; position: absolute; left: 1px; top: -2px; width: 2px; height: 6px; border: solid #333b4a; border-width: 0 0 1px 1px; box-sizing: border-box; }

/* bottom row */
.bottom { flex: none; display: flex; height: 415px; margin-top: 9px; padding-left: 8px; }
.info {
  width: 200px;
  flex: none;
  box-sizing: border-box;
  padding: 6px 7px;
  margin-right: 8px;
  background: #7d8aa0;
  border-radius: 8px;
  display: flex;
  flex-direction: column;
}
.info h4 {
  height: 17px;
  background: #dfe2e5;
  padding-left: 5px;
  font: italic 700 10.500px/17px "Liberation Sans", sans-serif;
  letter-spacing: .1px;
}
.help { flex: 1; background: #b9bfc4; padding: 2px 0 0 5px; }
.help p {
  height: 15px;
  line-height: 15px;
  white-space: nowrap;
  letter-spacing: .2px;
  color: #1e2430;
  -webkit-text-stroke: .3px #1e2430;
}
.help .keyline { letter-spacing: .12px; -webkit-text-stroke: .15px #1e2430; }

.detail {
  width: 976px;
  flex: none;
  box-sizing: border-box;
  background: linear-gradient(#8f97a2, #969da3);
  border-radius: 8px;
  padding: 6px 7px 7px 6px;
  display: flex;
  justify-content: space-between;
}
.devices { align-self: flex-end; display: flex; align-items: flex-start; gap: 4px; height: 187px; }
.clip-col { width: 70px; display: flex; flex-direction: column; }
.dev { box-sizing: border-box; border: 1px solid #7d8aa0; background: #b9bfc4; }
.clip-dev { height: 167px; }
.notes-dev { width: 127px; height: 187px; }
.env-dev { width: 138px; height: 187px; margin-left: 1px; }
.dev-title {
  height: 17px;
  background: #aa9669;
  display: flex;
  align-items: center;
  padding: 0 4px;
  gap: 5px;
  font: italic 700 10.500px "Liberation Sans", sans-serif;
  color: #1c1c16;
}
.rnd-end { margin-left: auto; display: block; color: #8c96a8; }
.rnd-end.on-y { color: #eeee33; }
.power {
  width: 11px;
  height: 11px;
  border-radius: 50%;
  background: linear-gradient(#7a7a30, #7a7a30) no-repeat center / 1px 5px, #eeee33;
  border: 1px solid #7a7a30;
  box-sizing: border-box;
  flex: none;
  margin-left: 1px;
}
.dev-col { display: flex; flex-direction: column; gap: 4px; }
.pad { padding: 3px 4px 0; }
.dev-body { display: flex; padding: 3px 0 0 4px; }
.n-left { width: 46px; }
.n-right { width: 61px; }
.e-left { width: 58px; margin-left: -1px; }
.e-right { width: 60px; }
.divider { width: 2px; height: 163px; margin: 0 4px; background: #7d8aa0; flex: none; }
.lab { height: 13px; line-height: 15px; white-space: nowrap; font-size: 10px; color: #2b313b; letter-spacing: .1px; }
.lab.first { line-height: 13px; }
.val {
  box-sizing: border-box;
  height: 13px;
  line-height: 11px;
  border: 1px solid #5a6678;
  background: #eceeee;
  text-align: right;
  padding-right: 1px;
  display: block;
  color: #2b313b;
  font-size: 10px;
}
.val.c { text-align: center; padding: 0; }
.val.tan { background: #aa9669; text-align: right; padding-right: 1px; }
.val.dimmed { background: #b9bfc4; }
.sig-row { display: flex; justify-content: space-between; align-items: center; }
.sig-row .val { width: 27px; }
.nudge { display: flex; justify-content: space-between; margin-top: 10px; }
.nudge .pill { width: 29px; }
.pill.dim { color: #7a8494; background: #a8aeb8; }
.pill.faded { width: 22px; color: #dfe2e5; height: 13px; }
.pair-p { display: flex; justify-content: space-between; }
.pair-p .pill { width: 21px; }
.lab-set { display: flex; justify-content: space-between; height: 13px; line-height: 13px; color: #2b313b; }
.triple { display: flex; gap: 2px; }
.triple .val { width: 15px; flex: none; }
.triple .val:first-child { width: 26px; }
.rule { height: 2px; margin: 5px 0 2px; background: #7d8aa0; display: block; }
.btn-flat {
  box-sizing: border-box;
  height: 13px;
  line-height: 11px;
  border: 1px solid #5a6678;
  background: #a0a8b4;
  text-align: center;
  display: block;
  color: #232a33;
}
.btn-flat.ghost { color: #c6cad0; }
.pill.full { color: #2b313b; }
.region { margin-top: 13px; }
.val.linked { background: #eeee33; color: #222; }
.clip-sw { display: flex; gap: 6px; margin: 2px 0 0 5px; }
.sw.big { display: flex; align-items: center; justify-content: center; font-size: 7.500px; font-weight: 700; }

/* piano roll */
.piano {
  width: 613px;
  flex: none;
  box-sizing: border-box;
  background: #b9bfc4;
  border: 1px solid #7d8aa0;
  border-right: 0;
  display: flex;
  flex-direction: column;
}
.pr-top { height: 43px; display: flex; flex: none; }
.pr-corner { width: 45px; flex: none; display: flex; flex-direction: column; align-items: flex-start; padding: 3px 0 0 2px; box-sizing: border-box; }
.fold {
  box-sizing: border-box;
  width: 27px;
  height: 13px;
  line-height: 11px;
  text-align: center;
  border: 1px solid #5a6678;
  background: #a9b1bb;
  color: #2b313b;
}
.phones { margin: 12px 0 0 29px; display: block; }
.pr-head { flex: 1; display: flex; flex-direction: column; background: #a9b1bb; }
.pr-ruler { height: 17px; position: relative; }
.rtick { position: absolute; top: 6px; font-size: 10px; line-height: 11px; text-indent: 4px; color: #1f2530; letter-spacing: .2px; }
.rtick::before { content: ""; position: absolute; left: 0; top: 4px; width: 2px; height: 7px; border: solid #333b4a; border-width: 1px 0 0 1px; box-sizing: border-box; }
.rdot { position: absolute; top: 16px; width: 1px; height: 1px; background: #333b4a; }
.pr-bar {
  height: 11px;
  width: 509px;
  box-sizing: border-box;
  background: #b9bfc4;
  border: solid #2f3644;
  border-width: 1px 0;
  display: flex;
  justify-content: flex-end;
}
.pr-sub { height: 11px; position: relative; background: #b2b8bf; margin-top: -1px; flex: 1; }
.end-tri { position: absolute; right: 0; top: 1px; }
.pr-band { height: 4px; flex: none; background: #7d8aa0; }
.gl { position: absolute; top: 0; bottom: 0; width: 1px; background: #7d8aa0; }
.pr-main { display: flex; height: 303px; flex: none; }
.pitch-labels { width: 27px; flex: none; position: relative; }
.pitch {
  position: absolute;
  left: 1px;
  width: 26px;
  height: 14px;
  box-sizing: border-box;
  border-bottom: 1px solid #8e98a6;
  padding-left: 2px;
  font-size: 10px;
  line-height: 16px;
  color: #2b313b;
}
.p-c3 { top: 57px; }
.p-fs2 { top: 145px; }
.p-c2 { top: 231px; }
.keys { width: 18px; flex: none; display: flex; flex-direction: column; }
.key { flex: 1; background: #fff; display: block; }
.key.black { background: #000; }
.roll { flex: 1; position: relative; overflow: hidden; display: flex; flex-direction: column; border-right: 1px solid #4a5364; }
.r-row { flex: 1; background: #e0e3e6; }
.r-row.black { background: #cdd1d4; }
.note { position: absolute; box-sizing: border-box; border: 1px solid #000; }
.played { position: absolute; left: 0; width: 2px; height: 14px; background: #ee5530; }
.vel-band { height: 4px; flex: none; background: #7d8aa0; }
.vel { flex: 1; display: flex; }
.vel-axis { width: 45px; flex: none; box-sizing: border-box; border-right: 1px solid #1f2530; position: relative; color: #2b313b; }
.vel-axis::after {
  content: "";
  position: absolute;
  right: 0;
  top: 0;
  bottom: 0;
  width: 3px;
  background: repeating-linear-gradient(#1f2530 0 1px, transparent 1px 12.500px);
}
.v127, .v64, .v1 { position: absolute; right: 6px; }
.v127 { top: -1px; }
.v64 { top: 19px; }
.v1 { top: 38px; }
.vel-play { position: absolute; left: 1px; top: 37px; }
.vel-lane { flex: 1; position: relative; background: #e0e3e6; overflow: hidden; border-right: 1px solid #4a5364; }
.stem { position: absolute; bottom: 0; width: 2px; background: #e83c78; }
.stem::before {
  content: "";
  position: absolute;
  left: -2px;
  top: -3px;
  width: 6px;
  height: 6px;
  box-sizing: border-box;
  border-radius: 50%;
  background: #f6d6e2;
  border: 2px solid #e83c78;
}
.stem.dark { background: #9a2450; }
.stem.dark::before { border-color: #9a2450; }
.ratio.vel-ratio { right: 4px; bottom: 1px; }

/* status */
.status { flex: 1; display: flex; align-items: flex-start; position: relative; }
.solo { margin: 10px 0 0 8px; }
.st-bar {
  margin: 8px 0 0 8px;
  width: 858px;
  height: 22px;
  box-sizing: border-box;
  padding: 3px 4px;
  background: #7d8aa0;
  border-radius: 4px;
}
.st-msg {
  height: 16px;
  background: #e8912e;
  display: flex;
  align-items: center;
  padding-left: 3px;
  gap: 3px;
  color: #1c1a14;
}
.st-text { letter-spacing: .19px; -webkit-text-stroke: .3px #1c1a14; }
.why {
  box-sizing: border-box;
  width: 56px;
  height: 13px;
  line-height: 11px;
  text-align: center;
  border: 1px solid #5a6678;
  border-radius: 7px;
  background: #a0a8b4;
  color: #232a33;
}
.st-tab {
  position: relative;
  margin-left: 6px;
  width: 209px;
  height: 30px;
  box-sizing: border-box;
  padding: 10px 3px 0 6px;
  background: #969da3;
  border-radius: 0 0 6px 6px;
}
.st-tab::before, .st-tab::after { content: ""; position: absolute; top: 0; width: 7px; height: 7px; }
.st-tab::before { left: -7px; background: radial-gradient(circle at 0 100%, #1f272e 7px, #969da3 7.500px); }
.st-tab::after { right: -7px; background: radial-gradient(circle at 100% 100%, #1f272e 7px, #969da3 7.500px); }
.mini-map { position: relative; width: 200px; height: 16px; background: #dfe2e5; }
.mn { position: absolute; height: 1px; background: #2f3647; }
.mini-frame { position: absolute; left: 62px; right: 0; top: -2px; bottom: -2px; border: 2px solid #000; }
.st-master {
  margin: 8px 0 0 9px;
  width: 48px;
  height: 22px;
  border-radius: 3px;
  background: #969da3;
  font-weight: 700;
  line-height: 22px;
  text-align: center;
  color: #1b2028;
}
.solo.end { margin-left: 7px; }
.grip { position: absolute; right: 0; bottom: 0; }
</style>
